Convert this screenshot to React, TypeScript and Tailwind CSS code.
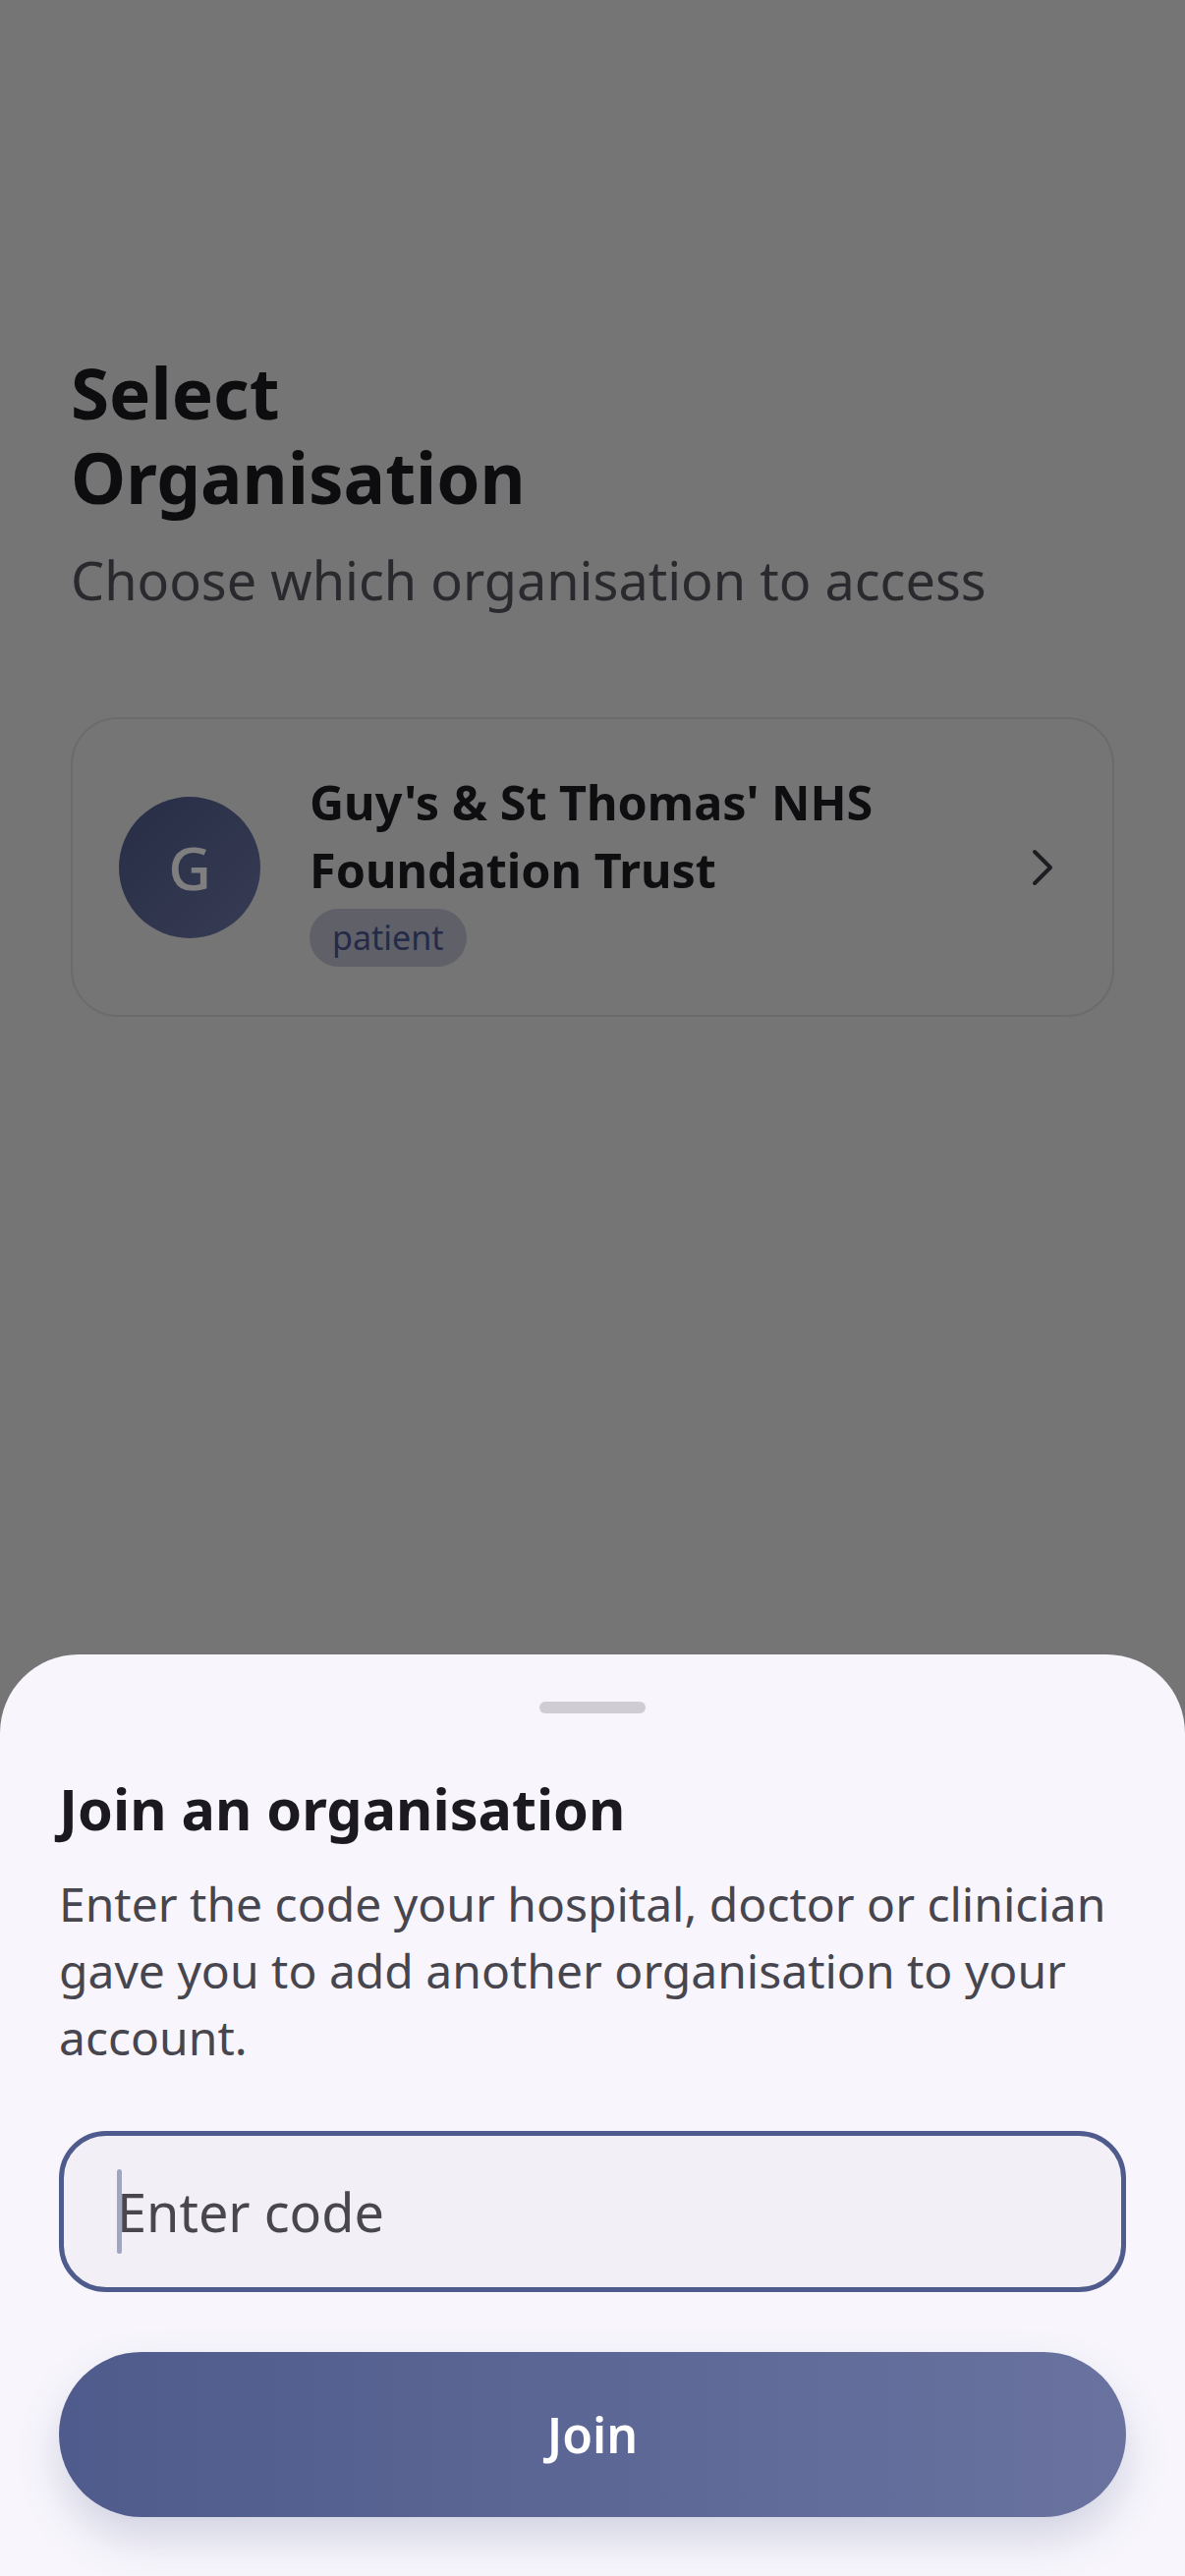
import { ChevronRight } from "lucide-react";

const orgs = [{ initial: "G", name: "Guy's & St Thomas' NHS Foundation Trust", role: "patient" }];

const App = () => {
  return (
    <div className="relative h-[2622px] w-full overflow-hidden bg-[#eaeaea] font-['Noto_Sans',sans-serif]">
      {/* page underneath */}
      <div className="flex flex-col px-[72px] pt-[357px]">
        <h1 className="text-[71px] font-bold leading-[86px] text-[#1a1a1e]">
          Select
          <br />
          Organisation
        </h1>
        <p className="mt-[26px] text-[54px] leading-[71px] text-[#54545c]">Choose which organisation to access</p>

        <div className="mt-[104px] flex flex-col gap-6">
          {orgs.map((org) => (
            <div
              key={org.name}
              className="flex items-center gap-[50px] rounded-[48px] border-2 border-[#d6d6d6] bg-[#eaeaea] pb-[49px] pt-[50px] pl-[47px] pr-[39px]"
            >
              <div className="flex h-[144px] w-[144px] shrink-0 items-center justify-center rounded-full bg-linear-to-br from-[#4f5b8c] to-[#6e79a8] text-[60px] font-medium text-white">
                {org.initial}
              </div>
              <div className="flex min-w-0 flex-1 flex-col items-start gap-[5px]">
                <div className="pr-[30px] text-[48.5px] font-bold leading-[69px] text-[#1c1c20]">{org.name}</div>
                <span className="rounded-[30px] bg-[#bec0d0] px-[23px] py-[7px] text-[34px] leading-[45px] text-[#4a5590]">
                  {org.role}
                </span>
              </div>
              <ChevronRight size={64} strokeWidth={1.5} className="shrink-0 text-[#3c3c44]" />
            </div>
          ))}
        </div>
      </div>

      {/* dim overlay */}
      <div className="absolute inset-0 bg-black/50" />

      {/* bottom sheet */}
      <div className="absolute inset-x-0 bottom-0 flex flex-col rounded-t-[80px] bg-[#f8f6fc] px-[60px] pb-[60px] pt-[48px]">
        <div className="mx-auto h-[12px] w-[108px] rounded-full bg-[#cfcdd3]" />
        <h2 className="mt-[62px] text-[57.5px] font-bold leading-[70px] text-[#1b1b1f]">Join an organisation</h2>
        <p className="mt-[28px] text-[48px] leading-[68px] text-[#47464f]">
          Enter the code your hospital, doctor or clinician gave you to add another organisation to your account.
        </p>

        <div className="mt-[61px] flex h-[164px] items-center rounded-[48px] border-[5px] border-[#4f5b8c] bg-[#f2f0f6] pl-[54px]">
          <span className="relative text-[54px] leading-[64px] text-[#48474d]">
            <span className="absolute -top-[11px] left-0 h-[86px] w-[5px] rounded-full bg-[#a0a5c3]" />
            Enter code
          </span>
        </div>

        <button
          type="button"
          className="mt-[61px] flex h-[168px] items-center justify-center rounded-full bg-linear-to-r from-[#4f5b8c] to-[#6a739f] text-[50px] font-semibold text-white shadow-[0_22px_44px_rgba(79,91,140,0.22)]"
        >
          Join
        </button>
      </div>
    </div>
  );
};

export default App;
